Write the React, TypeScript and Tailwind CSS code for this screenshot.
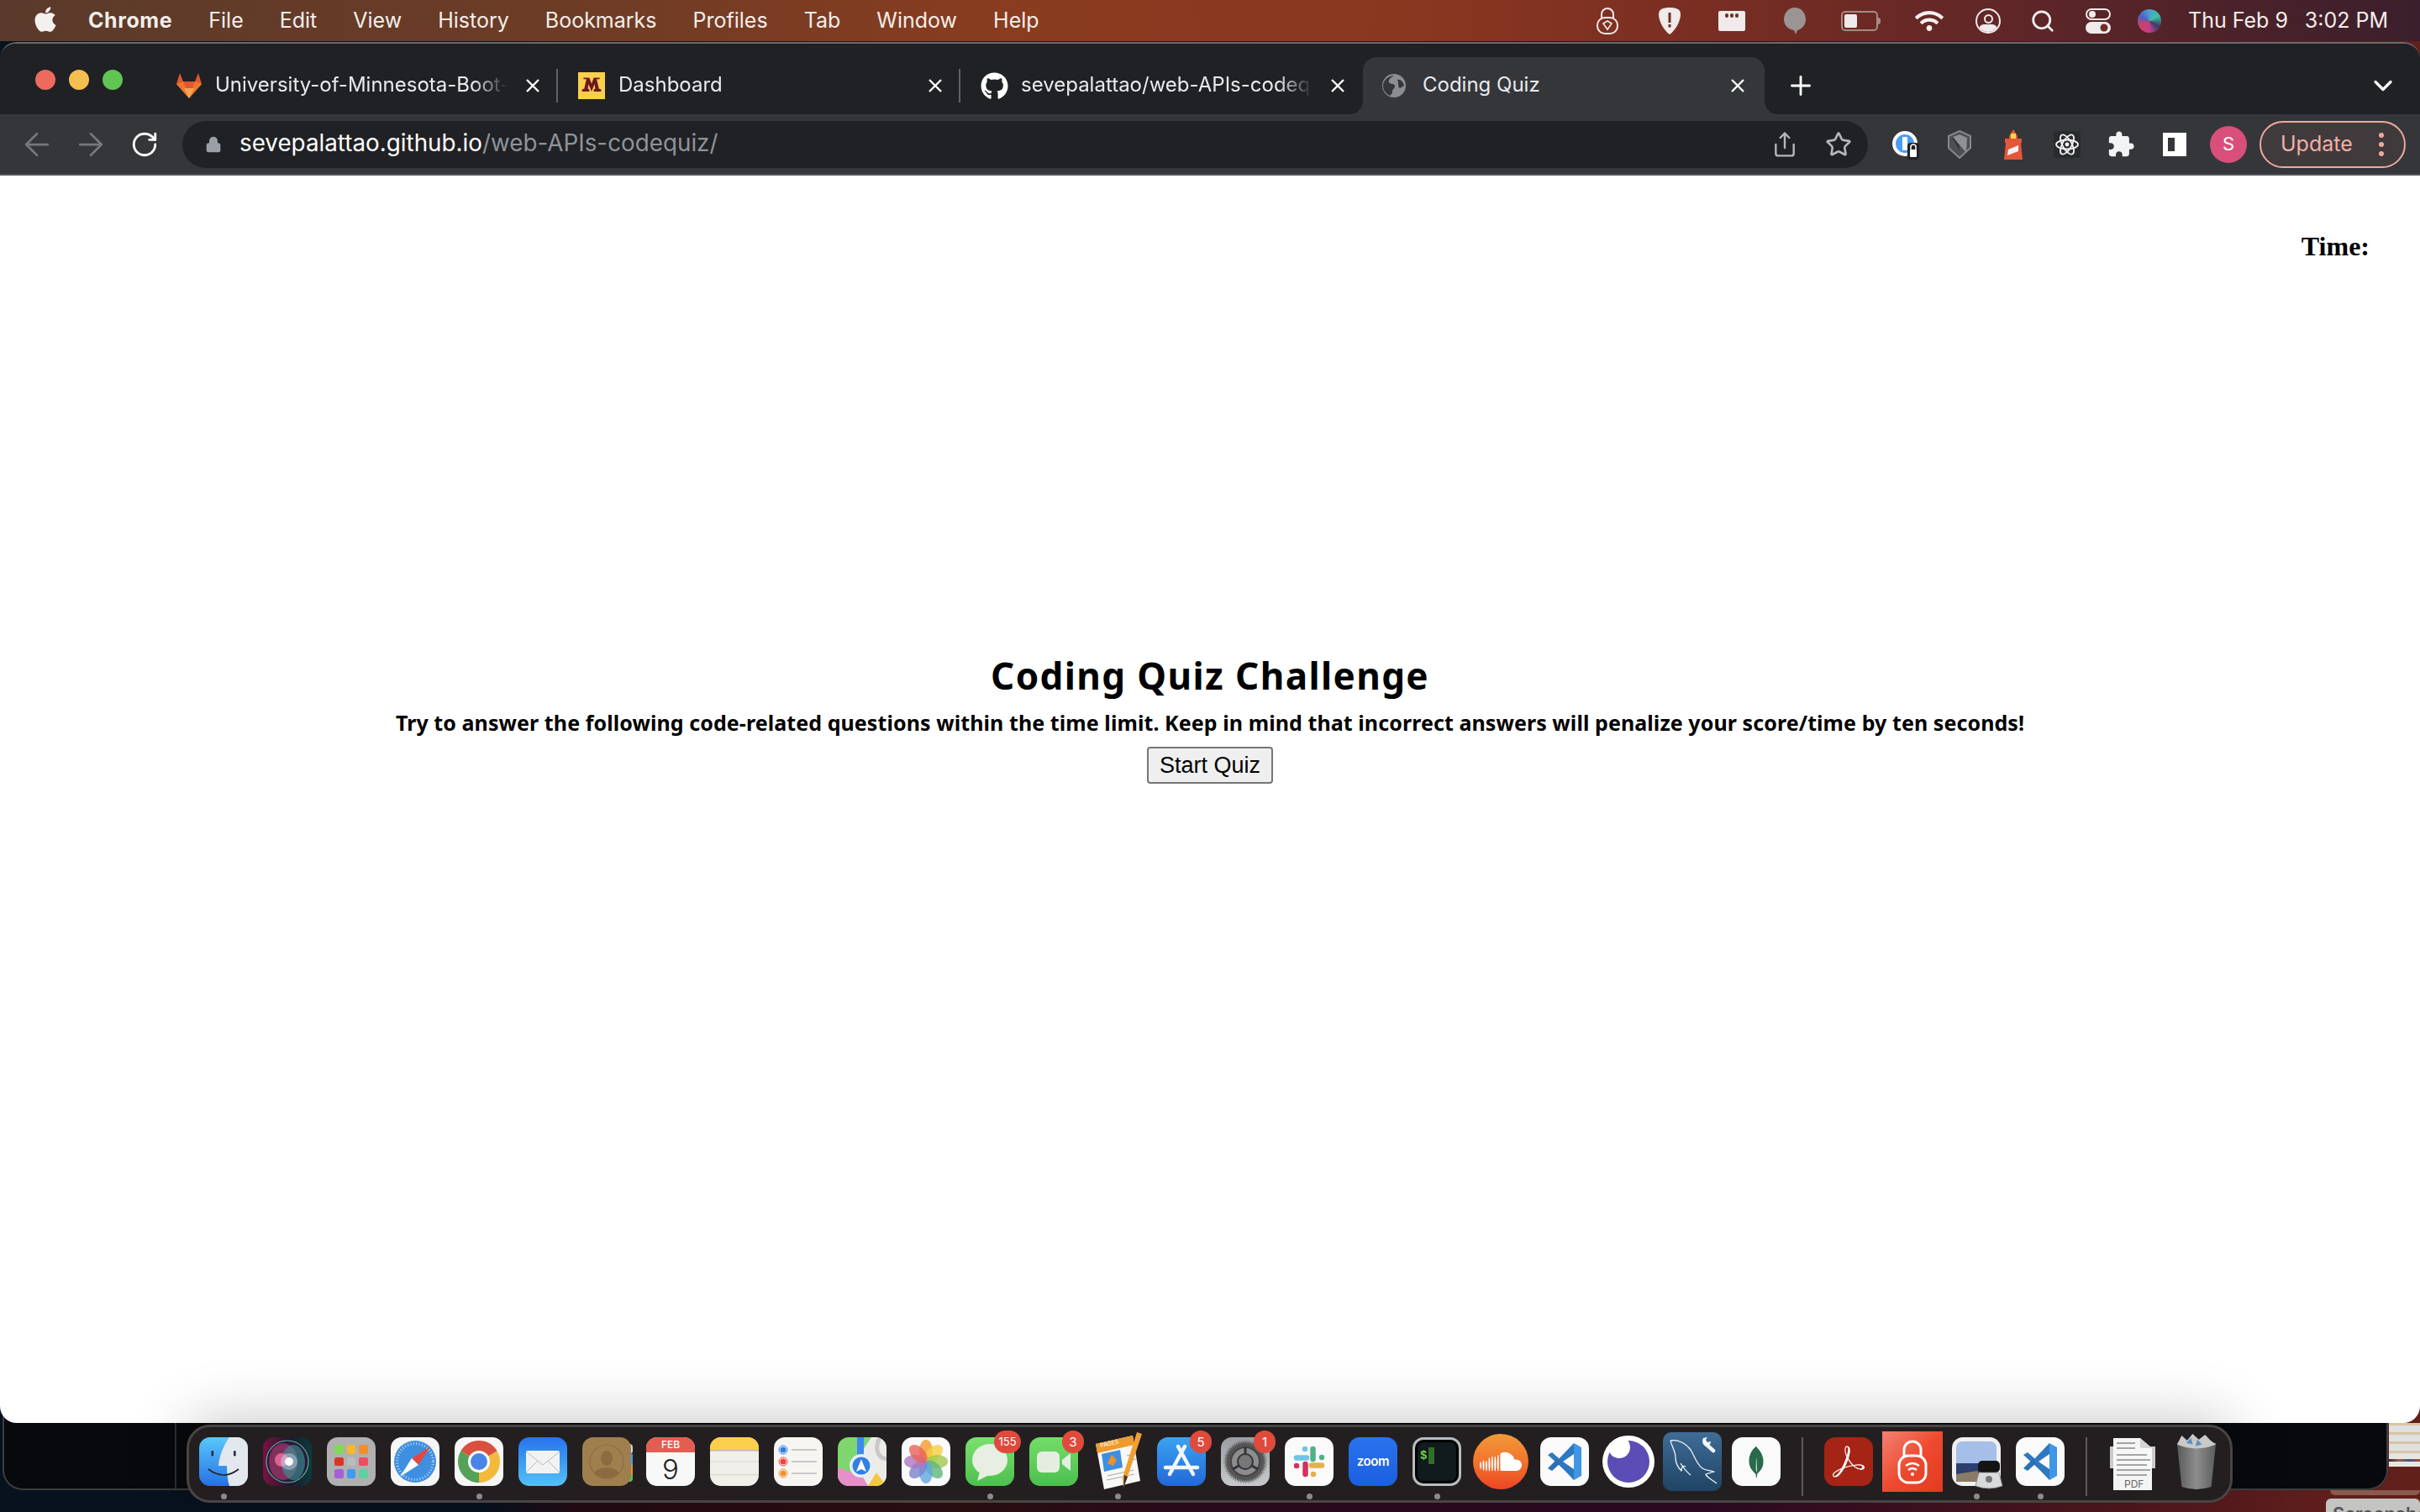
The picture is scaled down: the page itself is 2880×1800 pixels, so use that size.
import type { ReactNode } from "react"
import { ArrowLeft, ArrowRight, ChevronDown, Lock, Plus, RotateCw, Search, Share, Star } from "lucide-react"
import { FaApple, FaGithub, FaWifi } from "react-icons/fa"
import { SiAdobeacrobatreader, SiMongodb, SiSoundcloud } from "react-icons/si"

const Tile = ({ children, className = "" }: { children: ReactNode; className?: string }) => (
  <div className={`relative h-[58px] w-[58px] shrink-0 overflow-hidden rounded-[13px] ${className}`}>{children}</div>
)

const Art = ({ children }: { children: ReactNode }) => (
  <svg viewBox="0 0 58 58" className="absolute inset-0 h-full w-full">{children}</svg>
)

const Finder = () => (
  <Tile className="bg-gradient-to-b from-[#5ac8fa] to-[#2b6fe3]">
    <Art>
      <path d="M36 0C29 10 24 22 23 34H33C33 44 34 52 36 58H58V0Z" fill="#e3e7ee" />
      <rect x="14.5" y="16" width="2.6" height="6.5" rx="1.3" fill="#1d2c44" />
      <rect x="41" y="16" width="2.6" height="6.5" rx="1.3" fill="#1d2c44" />
      <path d="M11 38Q29 52 47 38" fill="none" stroke="#222" strokeWidth="1.6" />
    </Art>
  </Tile>
)

const Siri = () => (
  <Tile className="bg-[linear-gradient(to_right,#7a1240,#1a1a30_55%,#0d3a3a)]">
    <Art>
      <circle cx="29" cy="29" r="25" fill="#2a1a3a" stroke="#5ab0a0" strokeWidth="1.2" />
      <ellipse cx="24" cy="29" rx="17" ry="22" fill="#b03a70" opacity=".65" />
      <ellipse cx="36" cy="30" rx="14" ry="21" fill="#3a9a98" opacity=".6" />
      <circle cx="22" cy="27" r="8" fill="#f070a0" opacity=".8" />
      <circle cx="31" cy="29" r="10" fill="#cfe8ff" opacity=".4" />
      <circle cx="31" cy="29" r="5" fill="#ffffff" />
    </Art>
  </Tile>
)

const Launchpad = () => (
  <Tile className="grid grid-cols-3 content-center justify-center gap-[4px] bg-[#b0b0b0] px-[9px]">
    {["#7ed957", "#f5b82e", "#ef8f2c", "#d8352a", "#b8bcc0", "#ee4d5f", "#a55fd6", "#3d9bf5", "#5fd0a0"].map((c) => (
      <div key={c} className="h-[10.5px] rounded-[2.5px]" style={{ background: c }} />
    ))}
  </Tile>
)

const Safari = () => (
  <Tile className="bg-[#f6f6f6]">
    <Art>
      <circle cx="29" cy="29" r="25" fill="#3f8fe0" />
      <circle cx="29" cy="29" r="21.5" fill="none" stroke="#d8ecff" strokeWidth="3" strokeDasharray="0.8 2.6" />
      <path d="M47 11 L25 25 L33 33Z" fill="#e8473d" />
      <path d="M11 47 L33 33 L25 25Z" fill="#ffffff" />
    </Art>
  </Tile>
)

const Chrome = () => (
  <Tile className="bg-[#f6f6f6]">
    <Art>
      <path d="M29 29L7.35 16.5A25 25 0 0 1 50.65 16.5Z" fill="#d9503f" />
      <path d="M29 29L50.65 16.5A25 25 0 0 1 29 54Z" fill="#f2b93b" />
      <path d="M29 29L29 54A25 25 0 0 1 7.35 16.5Z" fill="#54a257" />
      <circle cx="29" cy="29" r="13" fill="#ffffff" />
      <circle cx="29" cy="29" r="10" fill="#4a84e6" />
    </Art>
  </Tile>
)

const Mail = () => (
  <Tile className="bg-gradient-to-b from-[#2a72ee] to-[#55c1f8]">
    <Art>
      <rect x="9" y="16" width="40" height="27" rx="2" fill="#f2f2f2" />
      <path d="M9 17L29 33L49 17M9 42L23 28M49 42L35 28" fill="none" stroke="#bdbdbd" strokeWidth="1" />
    </Art>
  </Tile>
)

const Contacts = () => (
  <div className="relative h-[58px] w-[58px] shrink-0">
    <div className="absolute right-[-2px] top-[8px] h-[12px] w-[6px] rounded-r bg-[#cfd3d8]" />
    <div className="absolute right-[-2px] top-[20px] h-[13px] w-[6px] bg-[#3da3ee]" />
    <div className="absolute right-[-2px] top-[33px] h-[11px] w-[6px] bg-[#ef8f2c]" />
    <div className="absolute right-[-2px] top-[44px] h-[9px] w-[6px] rounded-br bg-[#5cc05c]" />
    <Tile className="bg-[#a07f4e]">
      <Art>
        <circle cx="29" cy="29" r="20" fill="none" stroke="#8a6c40" strokeWidth="1.2" />
        <ellipse cx="29" cy="25" rx="7" ry="9" fill="#8a6c40" />
        <path d="M14 43C18 34 40 34 44 43C38 50 20 50 14 43Z" fill="#8a6c40" />
      </Art>
    </Tile>
  </div>
)

const Calendar = () => (
  <Tile className="bg-[#f8f8f8]">
    <div className="flex h-[18px] items-center justify-center bg-[#e35d50] font-['Inter',sans-serif] text-[12px] font-medium leading-none text-white">FEB</div>
    <div className="text-center font-['Inter',sans-serif] text-[33px] font-light leading-[40px] text-[#222]">9</div>
  </Tile>
)

const Notes = () => (
  <Tile className="bg-[#f1efe9]">
    <Art>
      <rect width="58" height="15" fill="#fbcf4d" />
      <rect y="15" width="58" height="1.5" fill="#b8b8b0" />
      <rect y="28" width="58" height="1.5" fill="#e2e0da" />
      <rect y="44" width="58" height="1.2" fill="#d6d4ce" />
    </Art>
  </Tile>
)

const Reminders = () => (
  <Tile className="bg-[#f6f5f2]">
    <Art>
      {[
        [15, "#2f7fe6"],
        [29, "#e8473d"],
        [43, "#ef8f2c"],
      ].map(([y, c]) => (
        <g key={String(c)}>
          <circle cx="11" cy={y as number} r="5" fill="#fff" stroke={c as string} strokeWidth="1" />
          <circle cx="11" cy={y as number} r="3.6" fill={c as string} />
          <rect x="21" y={(y as number) - 0.7} width="30" height="1.4" fill="#b5b5b5" />
        </g>
      ))}
    </Art>
  </Tile>
)

const Maps = () => (
  <Tile className="bg-[#7fd66f]">
    <Art>
      <path d="M0 36L58 58H0Z" fill="#e78fc8" />
      <path d="M58 24V58H36L20 30L40 0H58Z" fill="#ecebe8" />
      <path d="M36 58L46 42L58 58Z" fill="#f2c93c" />
      <rect x="23" y="0" width="8" height="30" fill="#3a8af0" />
      <path d="M58 26C46 24 44 12 50 0" fill="none" stroke="#c8c8c8" strokeWidth="5" />
      <circle cx="28" cy="34" r="14" fill="#e8edf4" />
      <circle cx="28" cy="34" r="10.5" fill="#2f7fe6" />
      <path d="M28 26L34 41L28 38L22 41Z" fill="#fff" />
    </Art>
  </Tile>
)

const Photos = () => (
  <Tile className="bg-[#fafafa]">
    <Art>
      {[
        [0, "#f39c2c"],
        [45, "#f5cf3e"],
        [90, "#a4c94e"],
        [135, "#5fb87a"],
        [180, "#62a8e0"],
        [225, "#7c83d0"],
        [270, "#b076c0"],
        [315, "#e8625a"],
      ].map(([a, c]) => (
        <ellipse key={String(a)} cx="29" cy="16" rx="8" ry="13" fill={c as string} opacity=".8" transform={`rotate(${a} 29 29)`} />
      ))}
    </Art>
  </Tile>
)

const Messages = () => (
  <Tile className="bg-gradient-to-b from-[#7be06f] to-[#4cbf4e]">
    <Art>
      <ellipse cx="29" cy="27" rx="21" ry="19" fill="#e6efe2" />
      <path d="M17 41L14 52L28 45Z" fill="#e6efe2" />
    </Art>
  </Tile>
)

const FaceTime = () => (
  <Tile className="bg-gradient-to-b from-[#74dc68] to-[#4cbf4e]">
    <Art>
      <rect x="9" y="17" width="27" height="25" rx="6" fill="#e4eee0" />
      <path d="M39 27L49 19V40L39 32Z" fill="#e4eee0" />
    </Art>
  </Tile>
)

const Pages = () => (
  <div className="relative h-[58px] w-[58px] shrink-0">
    <svg viewBox="0 0 58 70" className="absolute left-0 top-[-6px] h-[70px] w-[58px] overflow-visible">
      <path d="M3 14L47 4L56 58L13 68Z" fill="#f8f8f4" />
      <path d="M3 14L47 4L49 15L5 25Z" fill="#ef9a2c" />
      <path d="M10 26L32 21L35 42L13 47Z" fill="#3f8fe0" />
      <path d="M22 27L28 33L24 40L17 37Z" fill="#ef8f2c" />
      <path d="M17 52L48 45M16 57L49 50M40 28L50 26M41 34L51 32" stroke="#aaa" strokeWidth="1.2" />
      <path d="M52 0L58 2L40 56L36 66L35 54Z" fill="#f0a030" />
      <path d="M37 51L41 53L36 66Z" fill="#333" />
    </svg>
    <span className="absolute left-[8px] top-[4px] -rotate-12 font-['Inter',sans-serif] text-[7px] leading-none text-white">PAGES</span>
  </div>
)

const AppStore = () => (
  <Tile className="bg-gradient-to-b from-[#3da3f0] to-[#2467d8]">
    <Art>
      <path d="M33 11L15 44M25 11L43 44M10 36H48" fill="none" stroke="#f2f6fb" strokeWidth="4.5" strokeLinecap="round" />
    </Art>
  </Tile>
)

const SystemPrefs = () => (
  <Tile className="bg-gradient-to-b from-[#9a9ea3] to-[#c8cacc]">
    <Art>
      <circle cx="29" cy="29" r="24" fill="#555" />
      <circle cx="29" cy="29" r="24" fill="none" stroke="#888" strokeWidth="4" strokeDasharray="1.5 1.5" />
      <circle cx="29" cy="29" r="17" fill="#8b8d90" stroke="#444" strokeWidth="2" />
      <circle cx="29" cy="29" r="9" fill="#777" stroke="#333" strokeWidth="2" />
      <path d="M29 20V12M21 34L14 38M37 34L44 38" stroke="#333" strokeWidth="3" />
    </Art>
  </Tile>
)

const Slack = () => (
  <Tile className="bg-[#fafafa]">
    <Art>
      <g fill="none" strokeLinecap="round" strokeWidth="6.5">
        <path d="M14 24.5H26M24 14V14.1" stroke="#6ec6e6" />
        <path d="M33.5 14V26M44 24V24.1" stroke="#4fb286" />
        <path d="M32 33.5H44M34 44V44.1" stroke="#e5b04a" />
        <path d="M24.5 32V44M14 34V34.1" stroke="#d6305f" />
      </g>
    </Art>
  </Tile>
)

const Zoom = () => (
  <Tile className="flex items-center justify-center bg-gradient-to-b from-[#2a72ee] to-[#1a5fe0]">
    <span className="font-['Inter',sans-serif] text-[15px] font-semibold tracking-tight text-white">zoom</span>
  </Tile>
)

const Terminal = () => (
  <Tile className="border-[3px] border-[#b7bcbf] bg-black p-[3px]">
    <div className="flex h-full gap-[2px] rounded-[7px] bg-[#111a1c] px-[3px] pt-[6px]">
      <span className="font-['Liberation_Mono',monospace] text-[14px] font-bold leading-[20px] text-[#6fd34c]">$</span>
      <div className="h-[20px] w-[7px] bg-[#2f6f2a]" />
    </div>
  </Tile>
)

const SoundCloud = () => (
  <div className="flex h-[66px] w-[66px] shrink-0 items-center justify-center rounded-full bg-gradient-to-b from-[#f29a38] to-[#ee4423]">
    <SiSoundcloud size={50} color="#fff" />
  </div>
)

const VSCode = () => (
  <Tile className="bg-[#fafafa]">
    <Art>
      <path d="M40 7L49 12V46L40 51Z" fill="#3f96e6" />
      <path d="M40 7L19 29L40 51L40 38L27 29L40 20Z" fill="#2e78c0" />
      <path d="M9 21L14 18L36 37L32 42Z" fill="#2e78c0" />
      <path d="M9 37L14 40L24 31L20 26Z" fill="#2b6fb5" />
    </Art>
  </Tile>
)

const Moon = () => (
  <div className="relative h-[62px] w-[62px] shrink-0 overflow-hidden rounded-full bg-white">
    <svg viewBox="0 0 62 62" className="h-full w-full">
      <circle cx="31" cy="31" r="25" fill="#5b4db5" />
      <circle cx="20" cy="14" r="13" fill="#fff" />
    </svg>
  </div>
)

const MySql = () => (
  <div className="h-[70px] w-[70px] shrink-0 overflow-hidden rounded-[10px] bg-gradient-to-b from-[#3f6d97] to-[#1f4464]">
    <svg viewBox="0 0 70 70" className="h-full w-full">
      <g fill="none" stroke="#f2f6fa" strokeWidth="1.3" strokeLinejoin="round">
        <path d="M9 10C17 8 27 13 33 21C38 29 40 38 47 43C51 46 56 45 61 47L51 50C52 54 58 56 64 61" />
        <path d="M9 10C10 16 15 22 15 30C15 36 17 41 22 46C22 42 24 39 27 41" />
        <path d="M21 37C24 42 28 47 33 51" />
      </g>
      <path d="M50 13L60 22" stroke="#f2f6fa" strokeWidth="4.5" strokeLinecap="round" />
      <path d="M48 7A7 7 0 0 0 52 17A7 7 0 0 0 57 11L53 12L51 9L53 6Z" fill="#f2f6fa" />
    </svg>
  </div>
)

const Mongo = () => (
  <Tile className="flex items-center justify-center bg-[#fafafa]">
    <SiMongodb size={38} color="#2a6a4c" />
  </Tile>
)

const Acrobat = () => (
  <Tile className="flex items-center justify-center bg-[#a62415]">
    <SiAdobeacrobatreader size={38} color="#fff" />
  </Tile>
)

const WifiLock = () => (
  <div className="relative h-[72px] w-[72px] shrink-0 bg-gradient-to-br from-[#f28070] via-[#ee4a30] to-[#e23a1e]">
    <svg viewBox="0 0 72 72" className="h-full w-full">
      <path d="M26 30V22A10 10 0 0 1 46 22V30" fill="none" stroke="#fff" strokeWidth="3" />
      <rect x="20" y="29" width="32" height="32" rx="11" fill="none" stroke="#fff" strokeWidth="3" />
      <path d="M28 41Q36 35 44 41M31 46Q36 42 41 46" fill="none" stroke="#fff" strokeWidth="2.4" />
      <circle cx="36" cy="51" r="2" fill="#fff" />
    </svg>
  </div>
)

const Preview = () => (
  <div className="relative h-[58px] w-[58px] shrink-0">
    <Tile className="bg-[#f0f0f0]">
      <Art>
        <rect x="5" y="5" width="48" height="48" rx="7" fill="#a5bfe8" />
        <rect x="5" y="31" width="48" height="14" fill="#2c3f6e" />
        <path d="M5 44L30 40L36 53H5Z" fill="#8a7a68" />
      </Art>
    </Tile>
    <svg viewBox="0 0 36 34" className="absolute left-[26px] top-[28px] h-[34px] w-[36px]">
      <rect x="5" y="0" width="26" height="14" rx="5" fill="#141414" />
      <path d="M6 14H30L34 30Q18 36 2 30Z" fill="#d8dadc" stroke="#888" strokeWidth="0.8" />
      <circle cx="18" cy="22" r="4" fill="#777" />
    </svg>
  </div>
)

const PdfDoc = () => (
  <div className="relative mt-[6px] h-[62px] w-[54px] shrink-0">
    <svg viewBox="0 0 54 62" className="absolute inset-0 h-full w-full">
      <path d="M4 0H36L50 12V62H4Z" fill="#f4f4f4" />
      <path d="M0 10H54V36H0Z" fill="#f7f7f7" opacity=".8" />
      <path d="M8 6H30M8 12H30M8 20H44M8 26H48M8 32H44M8 38H48M8 44H44" stroke="#555" strokeWidth="1.2" />
      <path d="M36 0L50 12H36Z" fill="#d4d4d4" />
    </svg>
    <span className="absolute bottom-[1px] left-[17px] font-['Inter',sans-serif] text-[12px] leading-none text-[#666]">PDF</span>
  </div>
)

const Trash = () => (
  <div className="h-[68px] w-[50px] shrink-0">
    <svg viewBox="0 0 54 70" className="h-full w-full" preserveAspectRatio="none">
      <defs>
        <linearGradient id="can" x1="0" x2="1">
          <stop offset="0" stopColor="#5a5a5a" />
          <stop offset=".5" stopColor="#8d8d8d" />
          <stop offset="1" stopColor="#5c5c5c" />
        </linearGradient>
      </defs>
      <path d="M2 12L52 12L46 66Q27 72 8 66Z" fill="url(#can)" />
      <path d="M2 14L8 3L15 9L22 1L30 8L38 2L45 9L52 14Q27 24 2 14Z" fill="#c9c9c9" />
      <path d="M14 12L20 6L22 14ZM28 8L34 14L26 16Z" fill="#5b8fc0" />
    </svg>
  </div>
)

const dockLeft = [
  { id: "finder", icon: <Finder />, dot: true },
  { id: "siri", icon: <Siri /> },
  { id: "launchpad", icon: <Launchpad /> },
  { id: "safari", icon: <Safari /> },
  { id: "chrome", icon: <Chrome />, dot: true },
  { id: "mail", icon: <Mail /> },
  { id: "contacts", icon: <Contacts /> },
  { id: "calendar", icon: <Calendar /> },
  { id: "notes", icon: <Notes /> },
  { id: "reminders", icon: <Reminders /> },
  { id: "maps", icon: <Maps /> },
  { id: "photos", icon: <Photos /> },
  { id: "messages", icon: <Messages />, dot: true, badge: "155" },
  { id: "facetime", icon: <FaceTime />, badge: "3" },
  { id: "pages", icon: <Pages />, dot: true },
  { id: "appstore", icon: <AppStore />, badge: "5" },
  { id: "prefs", icon: <SystemPrefs />, badge: "1" },
  { id: "slack", icon: <Slack />, dot: true },
  { id: "zoom", icon: <Zoom /> },
  { id: "terminal", icon: <Terminal />, dot: true },
  { id: "soundcloud", icon: <SoundCloud /> },
  { id: "vscode", icon: <VSCode /> },
  { id: "moon", icon: <Moon /> },
  { id: "mysql", icon: <MySql /> },
  { id: "mongo", icon: <Mongo /> },
]

const dockMiddle = [
  { id: "acrobat", icon: <Acrobat /> },
  { id: "wifilock", icon: <WifiLock /> },
  { id: "preview", icon: <Preview />, dot: true },
  { id: "vscode2", icon: <VSCode />, dot: true },
]

const dockRight = [
  { id: "pdf", icon: <PdfDoc /> },
  { id: "trash", icon: <Trash /> },
]

type DockEntry = { id: string; icon: ReactNode; dot?: boolean; badge?: string }

const DockItem = ({ item }: { item: DockEntry }) => (
  <div className="relative flex w-[76px] shrink-0 flex-col items-center">
    <div className="flex h-[58px] w-full items-center justify-center">{item.icon}</div>
    {item.dot && <div className="mt-[9px] h-[7px] w-[7px] rounded-full bg-[#8f8a8a]" />}
    {item.badge && (
      <div
        className={`absolute top-[-8px] flex h-[27px] items-center justify-center rounded-full bg-[#e04a3c] font-['Inter',sans-serif] leading-none text-white ${
          item.badge.length > 1 ? "right-[1px] w-[32px] text-[13px]" : "right-[2px] w-[26px] text-[15px]"
        }`}
      >
        {item.badge}
      </div>
    )}
  </div>
)

const Dock = () => (
  <div className="absolute left-[222px] top-[1696px] flex h-[93px] w-[2435px] items-start rounded-[28px] border-[3px] border-[#494545] bg-[#231f20] pl-[3px] pt-[12px] shadow-[0_-6px_70px_rgba(0,0,0,0.22)]">
    {dockLeft.map((item) => (
      <DockItem key={item.id} item={item} />
    ))}
    <div className="mx-[16px] h-[70px] w-[2px] shrink-0 bg-[#5e5a5a]" />
    {dockMiddle.map((item) => (
      <DockItem key={item.id} item={item} />
    ))}
    <div className="mx-[16px] h-[70px] w-[2px] shrink-0 bg-[#5e5a5a]" />
    {dockRight.map((item) => (
      <DockItem key={item.id} item={item} />
    ))}
  </div>
)

const CloseX = () => (
  <svg viewBox="0 0 16 16" className="h-[16px] w-[16px] shrink-0">
    <path d="M1 1L15 15M15 1L1 15" stroke="#fff" strokeWidth="2.4" />
  </svg>
)

const GitlabIcon = () => (
  <svg viewBox="0 0 32 32" className="h-[32px] w-[32px] shrink-0">
    <path d="M1 14L5 1L9 11H23L27 1L31 14L16 31Z" fill="#e2572f" />
    <path d="M1 14L9 11L16 31Z" fill="#f0762e" />
    <path d="M31 14L23 11L16 31Z" fill="#f0762e" />
    <path d="M10 19H22L16 31Z" fill="#f9a650" />
  </svg>
)

const MinnesotaIcon = () => (
  <div className="flex h-[32px] w-[32px] shrink-0 items-center justify-center bg-[#fbcf4d]">
    <svg viewBox="0 0 32 32" className="h-[28px] w-[28px]">
      <path d="M3 24V21L6 20L9 7H5V5H13L16 13L19 5H27V7H23L26 20L29 21V24H19V21L21 20L20 14L16 24L12 14L11 20L13 21V24Z" fill="#6d1a1e" />
    </svg>
  </div>
)

const GlobeIcon = () => (
  <svg viewBox="0 0 28 28" className="h-[28px] w-[28px] shrink-0">
    <circle cx="14" cy="14" r="14" fill="#8a8d92" />
    <path d="M14 2C8 5 6 9 9 11C12 13 15 11 15 15C15 18 11 18 12 23L9 26C3 23 1 18 1 14C1 8 7 2 14 2ZM18 7C22 6 25 10 26 14L21 17C18 15 20 11 18 7Z" fill="#35363a" />
  </svg>
)

const tabClass = "flex h-[68px] w-[479px] shrink-0 items-center pl-[24px] pr-[22px]"
const titleClass =
  "flex-1 overflow-hidden whitespace-nowrap pb-[2px] font-['Inter',sans-serif] text-[24px] text-[#e8eaed] [mask-image:linear-gradient(to_right,black_88%,transparent)]"

const TabBar = () => (
  <div className="flex h-[84px] shrink-0 items-end bg-[#202124] pl-[42px]">
    <div className="mb-[29px] flex h-[24px] w-[143px] shrink-0 gap-[16px]">
      <div className="h-[24px] w-[24px] rounded-full bg-[#ed6a5e]" />
      <div className="h-[24px] w-[24px] rounded-full bg-[#f5bf4f]" />
      <div className="h-[24px] w-[24px] rounded-full bg-[#61c554]" />
    </div>
    <div className={tabClass}>
      <GitlabIcon />
      <div className={`${titleClass} ml-[15px]`}>University-of-Minnesota-Boot-Camp</div>
      <div className="ml-[22px]"><CloseX /></div>
    </div>
    <div className="mb-[14px] h-[40px] w-[2px] shrink-0 -ml-[2px] bg-[#5f6368]" />
    <div className={tabClass}>
      <MinnesotaIcon />
      <div className={`${titleClass} ml-[16px]`}>Dashboard</div>
      <CloseX />
    </div>
    <div className="mb-[14px] h-[40px] w-[2px] shrink-0 -ml-[2px] bg-[#5f6368]" />
    <div className={tabClass}>
      <FaGithub size={33} color="#fff" className="shrink-0" />
      <div className={`${titleClass} ml-[15px]`}>sevepalattao/web-APIs-codequiz</div>
      <div className="ml-[22px]"><CloseX /></div>
    </div>
    <div className="relative flex h-[68px] w-[478px] shrink-0 items-center rounded-t-[16px] bg-[#35363a] pl-[23px] pr-[24px]">
      <div className="absolute bottom-0 left-[-16px] h-[16px] w-[16px] bg-[radial-gradient(circle_at_0_0,transparent_16px,#35363a_16px)]" />
      <div className="absolute bottom-0 right-[-16px] h-[16px] w-[16px] bg-[radial-gradient(circle_at_100%_0,transparent_16px,#35363a_16px)]" />
      <GlobeIcon />
      <div className="ml-[20px] flex-1 whitespace-nowrap pb-[2px] font-['Inter',sans-serif] text-[24px] text-[#e8eaed]">Coding Quiz</div>
      <CloseX />
    </div>
    <div className="flex h-[68px] w-[86px] shrink-0 items-center justify-center">
      <Plus size={36} color="#fff" strokeWidth={1.9} />
    </div>
    <div className="ml-auto flex h-[68px] w-[88px] shrink-0 items-center justify-center">
      <ChevronDown size={36} color="#fff" strokeWidth={2.2} />
    </div>
  </div>
)

const Slot = ({ children }: { children: ReactNode }) => (
  <div className="flex h-[56px] w-[64px] shrink-0 items-center justify-center">{children}</div>
)

const OnePassword = () => (
  <svg viewBox="0 0 32 36" className="h-[36px] w-[32px]">
    <circle cx="15" cy="17" r="15" fill="#fff" />
    <circle cx="15" cy="17" r="11" fill="#4a9cf5" />
    <rect x="12" y="9" width="6" height="16" rx="1" fill="#fff" />
    <rect x="18" y="16" width="14" height="20" rx="4" fill="#202124" />
    <rect x="21" y="24" width="8" height="9" rx="1" fill="#fff" />
    <path d="M22 24V21A3 3 0 0 1 28 21V24" fill="none" stroke="#fff" strokeWidth="1.5" />
  </svg>
)

const ShieldIcon = () => (
  <svg viewBox="0 0 28 34" className="h-[34px] w-[28px]">
    <path d="M14 1L27 7V21L14 33L1 21V7Z" fill="#4d4e52" stroke="#85878b" strokeWidth="2" />
    <path d="M5 9L14 5V24Z" fill="#35363a" />
    <path d="M6 8L22 27L23 9L14 5Z" fill="#8f9094" />
  </svg>
)

const Lighthouse = () => (
  <svg viewBox="0 0 24 36" className="h-[36px] w-[24px]">
    <path d="M12 0L17 8V16H21L23 36H1L3 16H7V8Z" fill="#e2583a" />
    <rect x="2" y="11" width="20" height="5" fill="#e2583a" />
    <rect x="9" y="5" width="6" height="6" fill="#fbd44a" />
    <path d="M6 24L18 19V26L5 31Z" fill="#f4f4f4" />
  </svg>
)

const ReactExt = () => (
  <div className="flex h-[32px] w-[32px] items-center justify-center rounded-[3px] bg-[#2a2b2f]">
    <svg viewBox="0 0 30 30" className="h-[30px] w-[30px]">
      <g fill="none" stroke="#f4f4f4" strokeWidth="1.8">
        <ellipse cx="15" cy="15" rx="13" ry="5.5" />
        <ellipse cx="15" cy="15" rx="13" ry="5.5" transform="rotate(60 15 15)" />
        <ellipse cx="15" cy="15" rx="13" ry="5.5" transform="rotate(120 15 15)" />
      </g>
      <circle cx="15" cy="15" r="2.4" fill="#f4f4f4" />
    </svg>
  </div>
)

const ExtensionPiece = () => (
  <svg viewBox="0 0 24 24" className="h-[34px] w-[34px]">
    <path
      d="M20.5 11H19V7c0-1.1-.9-2-2-2h-4V3.5C13 2.12 11.88 1 10.5 1S8 2.12 8 3.5V5H4c-1.1 0-1.99.9-1.99 2v3.8H3.5c1.49 0 2.7 1.21 2.7 2.7s-1.21 2.7-2.7 2.7H2V20c0 1.1.9 2 2 2h3.8v-1.5c0-1.49 1.21-2.7 2.7-2.7 1.49 0 2.7 1.21 2.7 2.7V22H17c1.1 0 2-.9 2-2v-4h1.5c1.38 0 2.5-1.12 2.5-2.5S21.88 11 20.5 11z"
      fill="#f1f3f4"
    />
  </svg>
)

const Toolbar = () => (
  <div className="flex h-[73px] shrink-0 items-center border-b-2 border-[#55565a] bg-[#35363a] pl-[12px]">
    <Slot><ArrowLeft size={44} color="#75777b" strokeWidth={1.5} /></Slot>
    <Slot><ArrowRight size={44} color="#75777b" strokeWidth={1.5} /></Slot>
    <Slot><RotateCw size={34} color="#fff" strokeWidth={2} /></Slot>
    <div className="ml-[13px] flex h-[56px] w-[2006px] shrink-0 items-center rounded-full bg-[#202124] pl-[27px] pr-[3px]">
      <Lock size={20} color="#9aa0a6" fill="#9aa0a6" strokeWidth={2} className="shrink-0" />
      <div className="ml-[21px] flex-1 whitespace-nowrap pb-[2px] font-['Inter',sans-serif] text-[27.8px] text-white">
        sevepalattao.github.io<span className="text-[#8f9399]">/web-APIs-codequiz/</span>
      </div>
      <Slot><Share size={32} color="#b4b6b9" strokeWidth={1.8} /></Slot>
      <Slot><Star size={32} color="#b4b6b9" strokeWidth={2} /></Slot>
    </div>
    <div className="ml-[13px] flex items-center">
      <Slot><OnePassword /></Slot>
      <Slot><ShieldIcon /></Slot>
      <Slot><Lighthouse /></Slot>
      <Slot><ReactExt /></Slot>
      <Slot><ExtensionPiece /></Slot>
      <Slot>
        <div className="h-[28px] w-[28px] border-[6px] border-r-[14px] border-white bg-[#35363a]" />
      </Slot>
      <Slot>
        <div className="flex h-[44px] w-[44px] items-center justify-center rounded-full bg-[#d94f7c] font-['Inter',sans-serif] text-[22px] text-white">S</div>
      </Slot>
    </div>
    <div className="ml-[5px] flex h-[56px] w-[174px] shrink-0 items-center rounded-full border-2 border-[#eea89f] bg-[#3f3a3c] pl-[23px]">
      <span className="font-['Inter',sans-serif] text-[25px] text-[#f0b0a6]">Update</span>
      <div className="ml-auto mr-[24px] flex flex-col gap-[5px]">
        <div className="h-[6px] w-[6px] rounded-full bg-[#eea89f]" />
        <div className="h-[6px] w-[6px] rounded-full bg-[#eea89f]" />
        <div className="h-[6px] w-[6px] rounded-full bg-[#eea89f]" />
      </div>
    </div>
  </div>
)

const MenuBar = () => (
  <div className="flex h-[49px] shrink-0 items-center bg-[linear-gradient(to_right,#5a3a2b,#6f3c25_25%,#8a3c1f_42%,#8a3720_58%,#7a2e22_70%,#5c2528_85%,#3a1f2c)] pl-[37px] font-['Inter',sans-serif] text-[25px] text-[#f4eeea]">
    <FaApple size={34} color="#f4f0ee" className="mr-[34px] -mt-[4px]" />
    <div className="flex items-center gap-[43px] whitespace-nowrap">
      <span className="font-bold tracking-[0.6px]">Chrome</span>
      <span>File</span>
      <span>Edit</span>
      <span>View</span>
      <span>History</span>
      <span>Bookmarks</span>
      <span>Profiles</span>
      <span>Tab</span>
      <span>Window</span>
      <span>Help</span>
    </div>
    <div className="ml-auto flex items-center pr-[38px]">
      <div className="flex w-[74px] justify-center">
        <svg viewBox="0 0 28 32" className="h-[32px] w-[28px]">
          <path d="M7 13V8A7 7 0 0 1 21 8V13" fill="none" stroke="#f0eaea" strokeWidth="2" />
          <rect x="2" y="12" width="24" height="19" rx="9" fill="none" stroke="#f0eaea" strokeWidth="2" />
          <path d="M9 19L14 26L19 19L14 16Z" fill="none" stroke="#f0eaea" strokeWidth="1.6" />
        </svg>
      </div>
      <div className="flex w-[74px] justify-center">
        <svg viewBox="0 0 28 34" className="h-[34px] w-[28px]">
          <path d="M14 1C22 1 27 3 27 9C27 18 20 29 14 33C8 29 1 18 1 9C1 3 6 1 14 1Z" fill="#f0eaea" />
          <rect x="12.5" y="7" width="3" height="12" fill="#6a3024" />
          <rect x="12.5" y="21" width="3" height="3.5" fill="#6a3024" />
        </svg>
      </div>
      <div className="flex w-[74px] justify-center">
        <div className="flex h-[24px] w-[32px] justify-center gap-[2px] rounded-[2px] bg-[#f0eaea] pt-[3px]">
          <div className="h-[5px] w-[4px] rounded-full bg-[#6a3024]" />
          <div className="h-[5px] w-[4px] rounded-full bg-[#6a3024]" />
          <div className="h-[5px] w-[4px] rounded-full bg-[#6a3024]" />
        </div>
      </div>
      <div className="flex w-[76px] justify-center">
        <svg viewBox="0 0 28 34" className="h-[34px] w-[28px]">
          <path d="M14 1C22 1 27 8 27 15C27 22 22 27 17 28L15 33L13 28C6 27 1 22 1 15C1 8 6 1 14 1Z" fill="#9a9492" />
        </svg>
      </div>
      <div className="flex w-[80px] justify-center">
        <div className="flex h-[24px] w-[44px] items-center rounded-[5px] border-2 border-[#a58a82] p-[2px]">
          <div className="h-full w-[15px] rounded-[2px] bg-[#f0eaea]" />
        </div>
        <div className="my-auto h-[8px] w-[3px] rounded-r bg-[#a58a82]" />
      </div>
      <div className="flex w-[84px] justify-center">
        <FaWifi size={34} color="#f4f0ee" />
      </div>
      <div className="flex w-[56px] justify-center">
        <div className="relative h-[30px] w-[30px] overflow-hidden rounded-full border-2 border-[#f0eaea]">
          <div className="mx-auto mt-[5px] h-[11px] w-[11px] rounded-full border-2 border-[#f0eaea]" />
          <div className="mx-auto mt-[1px] h-[12px] w-[22px] rounded-full bg-[#f0eaea]" />
        </div>
      </div>
      <div className="flex w-[74px] justify-center">
        <Search size={30} color="#f4f0ee" strokeWidth={2.2} />
      </div>
      <div className="flex w-[58px] justify-center">
        <svg viewBox="0 0 30 30" className="h-[30px] w-[30px]">
          <rect x="1" y="1" width="28" height="12" rx="6" fill="none" stroke="#f0eaea" strokeWidth="2" />
          <circle cx="8" cy="7" r="4" fill="#f0eaea" />
          <rect x="0" y="16" width="30" height="14" rx="7" fill="#f0eaea" />
          <circle cx="22" cy="23" r="4.5" fill="#6a3024" />
        </svg>
      </div>
      <div className="flex w-[64px] justify-center">
        <div className="h-[28px] w-[28px] rounded-full bg-[conic-gradient(#4aa0d0,#40c0a0,#3a3a66,#c04090,#d04060,#5060c0,#4aa0d0)]" />
      </div>
      <div className="ml-[14px] flex w-[238px] justify-between whitespace-nowrap">
        <span>Thu Feb 9</span>
        <span>3:02 PM</span>
      </div>
    </div>
  </div>
)

const Page = () => (
  <div className="flex flex-1 flex-col items-center bg-white">
    <div className="flex w-full justify-end pr-[60px] pt-[66px]">
      <span className="font-['Liberation_Serif',serif] text-[32px] font-bold leading-[37px] text-black">Time:</span>
    </div>
    <h1 className="mt-[470px] font-['Noto_Sans',sans-serif] text-[44px] font-bold leading-[44px] tracking-[1.4px] text-black">Coding Quiz Challenge</h1>
    <p className="mt-[18px] whitespace-nowrap font-['Noto_Sans',sans-serif] text-[25px] font-bold leading-[32px] tracking-[0.08px] text-black">
      Try to answer the following code-related questions within the time limit. Keep in mind that incorrect answers will penalize your score/time by ten seconds!
    </p>
    <button className="mt-[13px] h-[44px] w-[150px] rounded-[4px] border-2 border-[#767676] bg-[#efefef] font-['Liberation_Sans',sans-serif] text-[27px] leading-none text-black">
      Start Quiz
    </button>
  </div>
)

export default function App() {
  return (
    <div className="relative flex h-[1800px] w-[2880px] flex-col overflow-hidden bg-[linear-gradient(to_right,#07121e_0%,#07121e_20%,#260b14_24%,#2c1012_40%,#2c0a1e_50%,#2e0a24_70%,#561a1e_90%,#62201a_100%)]">
      {/* window behind chrome */}
      <div className="absolute bottom-[26px] left-[3px] top-[1500px] flex w-[2839px] rounded-b-[24px] border-2 border-[#3c3c3e] bg-[#08090c]">
        <div className="ml-[203px] h-full w-[2px] bg-[#2e2e30]" />
      </div>
      <div className="absolute left-[2843px] top-[1694px] flex h-[52px] w-[37px] flex-col bg-[#e8e6e0]">
        <div className="h-[37px] bg-[repeating-linear-gradient(to_bottom,#d8c4a4_0px,#d8c4a4_3px,#dfe0e0_3px,#dfe0e0_11px)]" />
        <div className="mt-[6px] h-[3px] bg-[linear-gradient(to_right,#23344f,#a05a4a,#3a5a8a,#c03a3a)]" />
      </div>
      <div className="absolute left-[2773px] top-[1774px] h-[6px] w-[107px] rounded-b-[6px] bg-[#8a5a4e]" />
      <div className="absolute left-[2768px] top-[1784px] h-[30px] w-[112px] overflow-hidden rounded-t-[6px] bg-[#c4c4c2] pl-[8px] pt-[7px] font-['Inter',sans-serif] text-[22px] font-semibold leading-none text-[#555]">
        Screenshot
      </div>

      <MenuBar />
      <div className="relative mt-[1px] flex h-[1644px] shrink-0 flex-col overflow-hidden rounded-[20px] border-t-2 border-[#6a6a6c]">
        <TabBar />
        <Toolbar />
        <Page />
      </div>
      <Dock />
    </div>
  )
}
